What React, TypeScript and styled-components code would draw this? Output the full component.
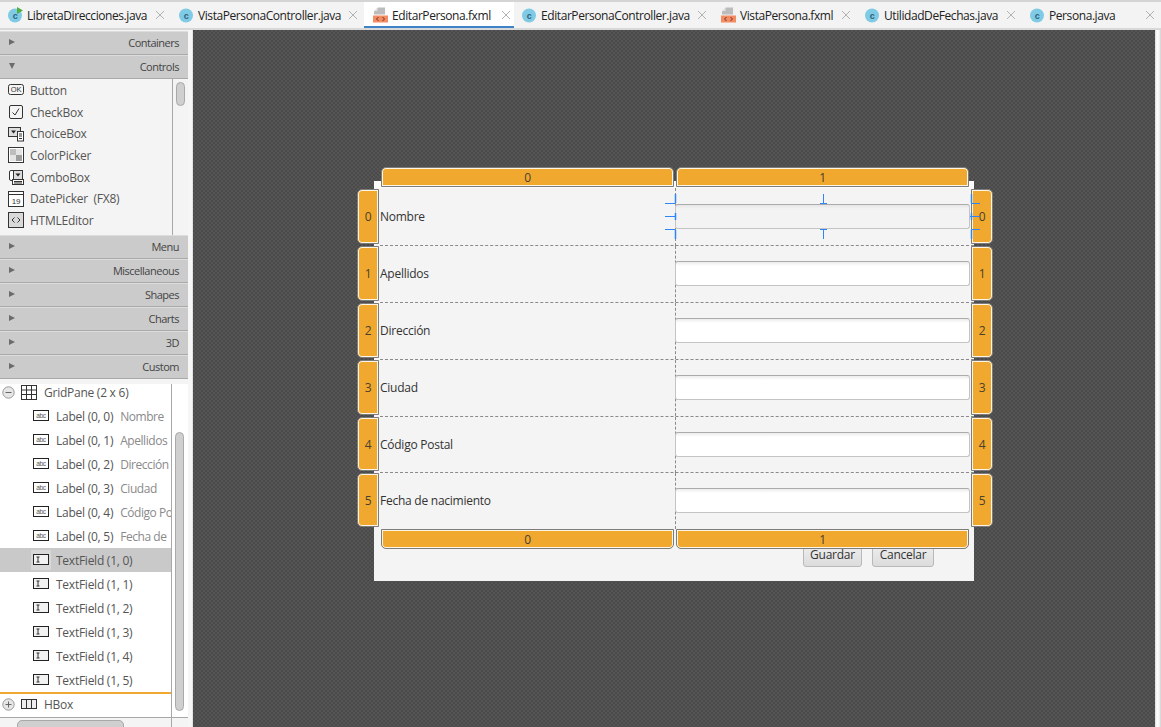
import React from "react";
import styled, { createGlobalStyle } from "styled-components";

const Global = createGlobalStyle`
  html, body { margin: 0; padding: 0; height: 100%; overflow: hidden; background: #f4f4f4; }
  #root { height: 100%; }
  * { box-sizing: border-box; }
`;

const Page = styled.div`
  width: 1161px;
  height: 727px;
  display: flex;
  flex-direction: column;
  font-family: "Open Sans", "Noto Sans", sans-serif;
  font-size: 12px;
  letter-spacing: -0.25px;
  color: #444;
  overflow: hidden;
`;

/* ---------- tabs ---------- */
const TabBar = styled.div`
  height: 30px;
  flex: none;
  display: flex;
  background: #f3f3f3;
  border-top: 2px solid #d4d4d4;
  border-bottom: 2px solid #d8d8d8;
`;
const Tab = styled.div<{ $width: number; $active?: boolean; $left: number }>`
  width: ${(p) => p.$width}px;
  height: 26px;
  flex: none;
  display: flex;
  align-items: center;
  padding: 2px ${(p) => (p.$active ? 3 : 6)}px 0 ${(p) => p.$left}px;
  gap: 4px;
  color: #222;
  letter-spacing: -0.42px;
  background: ${(p) => (p.$active ? "#fff" : "transparent")};
  border-bottom: 2px solid ${(p) => (p.$active ? "#3d83c6" : "transparent")};
  white-space: nowrap;
`;
const TabClose = styled.svg`
  width: 10px;
  height: 10px;
  margin-left: auto;
  flex: none;
`;
const TabIconBox = styled.svg`
  width: 15px;
  height: 16px;
  flex: none;
`;

const ClassIcon = ({ main }: { main?: boolean }) => (
  <TabIconBox viewBox="0 0 15 16">
    <circle cx="7" cy="8.5" r="7" fill="#7fcbe6" />
    <text x="7" y="11.5" textAnchor="middle" fontSize="9" fontFamily="Liberation Sans" fontWeight="700" fill="#2f5f78">c</text>
    {main && <path d="M9 0 L15 3.5 L9 7 Z" fill="#4fae3d" />}
  </TabIconBox>
);
const FxmlIcon = () => (
  <TabIconBox viewBox="0 0 15 16">
    <path d="M5 0.5 H12 V7.5 H1 V4.5 Z" fill="#bcbcbc" />
    <path d="M1 4 H4.5 V0.5 Z" fill="#e2e2e2" />
    <rect x="0" y="8.5" width="15" height="7" fill="#f38b63" />
    <polyline points="5.5,10 3.5,12 5.5,14" fill="none" stroke="#6b3322" strokeWidth="1" />
    <polyline points="9.5,10 11.5,12 9.5,14" fill="none" stroke="#6b3322" strokeWidth="1" />
  </TabIconBox>
);
const CloseGlyph = () => (
  <TabClose viewBox="0 0 10 10">
    <path d="M1 1 L9 9 M9 1 L1 9" stroke="#b2b2b2" strokeWidth="1" fill="none" />
  </TabClose>
);

const tabs = [
  { name: "LibretaDirecciones.java", w: 171, left: 8, kind: "main" },
  { name: "VistaPersonaController.java", w: 193, left: 8, kind: "class" },
  { name: "EditarPersona.fxml", w: 150, left: 9, kind: "fxml", active: true },
  { name: "EditarPersonaController.java", w: 199, left: 8, kind: "class" },
  { name: "VistaPersona.fxml", w: 144, left: 8, kind: "fxml" },
  { name: "UtilidadDeFechas.java", w: 165, left: 8, kind: "class" },
  { name: "Persona.java", w: 139, left: 8, kind: "class" },
];

/* ---------- sidebar ---------- */
const Body = styled.div`
  flex: 1;
  min-height: 0;
  display: flex;
`;
const Sidebar = styled.div`
  width: 188px;
  flex: none;
  display: flex;
  flex-direction: column;
  padding-top: 1px;
  background: #f4f4f4;
`;
const Gutter = styled.div`
  width: 5px;
  flex: none;
  background: #f6f6f6;
  border-right: 1px solid #e2e2e2;
`;
const RightStrip = styled.div`
  width: 6px;
  flex: none;
  background: linear-gradient(90deg, #dcdcdc, #fff 35%, #f4f4f4 70%, #cfcfcf);
`;
const Header = styled.div`
  height: 24px;
  flex: none;
  display: flex;
  align-items: center;
  justify-content: space-between;
  padding: 0 9px 2px 9px;
  background: #cbcbcb;
  border-top: 1px solid #dcdcdc;
  border-bottom: 1px solid #a9a9a9;
  color: #444;
  font-size: 11px;
  letter-spacing: -0.5px;
`;
const Arrow = styled.span<{ $open?: boolean }>`
  width: 0;
  height: 0;
  ${(p) =>
    p.$open
      ? `border-left: 3.5px solid transparent; border-right: 3.5px solid transparent; border-top: 6px solid #6c6c6c;`
      : `border-top: 3.5px solid transparent; border-bottom: 3.5px solid transparent; border-left: 6px solid #6c6c6c;`}
`;
const Palette = styled.div`
  height: 156px;
  flex: none;
  display: flex;
  overflow: hidden;
  background: #f4f4f4;
`;
const PaletteList = styled.div`
  width: 173px;
  flex: none;
  padding-top: 0.6px;
  border-right: 1px solid #a8a8a8;
  overflow: hidden;
`;
const PaletteRow = styled.div`
  height: 21.67px;
  display: flex;
  align-items: center;
  gap: 6px;
  padding-left: 8px;
  color: #555;
  white-space: pre;
`;
const IconSvg = styled.svg`
  width: 16px;
  height: 16px;
  flex: none;
`;
const ScrollTrack = styled.div<{ $pad: number }>`
  flex: 1;
  padding: ${(p) => p.$pad}px 3px 0 3px;
  display: flex;
  flex-direction: column;
`;
const Thumb = styled.div<{ $h: number }>`
  height: ${(p) => p.$h}px;
  width: 9px;
  flex: none;
  background: #cfcfcf;
  border: 1px solid #a9a9a9;
  border-radius: 5px;
`;

const S = { fill: "none", stroke: "#333", strokeWidth: 1 };
const paletteIcons: Record<string, React.ReactNode> = {
  ok: (
    <>
      <rect x="0.5" y="2.5" width="15" height="10" rx="2" {...S} />
      <text x="8" y="10.3" textAnchor="middle" fontSize="7.5" fontFamily="Liberation Sans" fill="#333">OK</text>
    </>
  ),
  check: (
    <>
      <rect x="1.5" y="1.5" width="13" height="13" rx="1.5" {...S} />
      <path d="M4.5 8.5 L7 11 L11 4.5" {...S} />
    </>
  ),
  choice: (
    <>
      <rect x="0.5" y="1.5" width="12" height="9" fill="#ddd" stroke="#333" />
      <path d="M3 4.5 H8 L5.5 7.5 Z" fill="#222" />
      <rect x="9.5" y="5.5" width="6" height="9.5" fill="#fff" stroke="#333" />
      <path d="M11 8 H14 M11 10 H14 M11 12.5 H14" {...S} />
    </>
  ),
  color: (
    <>
      <rect x="0.5" y="0.5" width="15" height="15" fill="#fff" stroke="#333" />
      <rect x="2" y="2" width="6" height="6" fill="#bdbdbd" />
      <rect x="8" y="8" width="6" height="6" fill="#9d9d9d" />
      <rect x="8" y="2" width="6" height="6" fill="#e4e4e4" />
      <rect x="2" y="8" width="6" height="6" fill="#e4e4e4" />
    </>
  ),
  combo: (
    <>
      <rect x="1.5" y="1.5" width="9" height="10" rx="1.5" fill="#fff" stroke="#333" />
      <rect x="5.5" y="1.5" width="9" height="9" fill="#ddd" stroke="#333" />
      <path d="M7.5 4.5 H12.5 L10 7.5 Z" fill="#222" />
      <rect x="4.5" y="10.5" width="11" height="5" fill="#fff" stroke="#333" />
      <path d="M6 12.5 H14 M6 14 H14" stroke="#333" />
    </>
  ),
  date: (
    <>
      <rect x="0.5" y="0.5" width="15" height="15" fill="#fff" stroke="#333" />
      <path d="M1 3.5 H15" stroke="#333" />
      <text x="8" y="12.6" textAnchor="middle" fontSize="8" fontFamily="Liberation Sans" fill="#333">19</text>
    </>
  ),
  html: (
    <>
      <rect x="0.5" y="0.5" width="15" height="15" fill="#d9d9d9" stroke="#333" />
      <path d="M6.5 5.5 L4 8 L6.5 10.5 M9.5 5.5 L12 8 L9.5 10.5" {...S} />
    </>
  ),
};
const paletteRows = [
  ["ok", "Button"],
  ["check", "CheckBox"],
  ["choice", "ChoiceBox"],
  ["color", "ColorPicker"],
  ["combo", "ComboBox"],
  ["date", "DatePicker  (FX8)"],
  ["html", "HTMLEditor"],
];

/* ---------- hierarchy tree ---------- */
const TreeGap = styled.div`
  height: 5px;
  flex: none;
  background: #f4f4f4;
`;
const TreePanel = styled.div`
  flex: 1;
  min-height: 0;
  display: flex;
  background: #fff;
  overflow: hidden;
`;
const TreeList = styled.div`
  width: 172px;
  flex: none;
  border-right: 1px solid #a8a8a8;
  overflow: hidden;
`;
const TreeScroller = styled.div`
  margin-top: -4px;
`;
const TreeRow = styled.div<{ $selected?: boolean; $root?: boolean; $marker?: boolean }>`
  height: 24px;
  display: flex;
  align-items: center;
  padding-left: ${(p) => (p.$root ? 2 : 31)}px;
  padding-bottom: ${(p) => (p.$marker ? 2 : 0)}px;
  background: ${(p) => (p.$selected ? "#c9c9c9" : "transparent")};
  border-top: ${(p) => (p.$marker ? "2px solid #f0a830" : "none")};
  color: #555;
  white-space: nowrap;
  overflow: hidden;
`;
const TreeIconWrap = styled.span<{ $selected?: boolean }>`
  width: 20px;
  height: 20px;
  display: flex;
  align-items: center;
  justify-content: center;
  flex: none;
  margin-right: 5px;
  background: ${(p) => (p.$selected ? "#d8d8d8" : "transparent")};
`;
const TreeValue = styled.span`
  color: #8a8a8a;
  margin-left: 7px;
  letter-spacing: -0.45px;
`;
const RootIconWrap = styled.span`
  display: flex;
  align-items: center;
  flex: none;
  gap: 6px;
  margin-right: 7px;
`;
const Disclosure = styled.svg`
  width: 13px;
  height: 13px;
  flex: none;
`;
const HScrollRow = styled.div`
  height: 10px;
  flex: none;
  display: flex;
  background: #f4f4f4;
  border-top: 1px solid #a8a8a8;
  overflow: hidden;
`;
const HScrollTrack = styled.div`
  width: 172px;
  flex: none;
  padding: 2px 0 0 17px;
  border-right: 1px solid #a8a8a8;
`;
const HThumb = styled.div`
  width: 107px;
  height: 12px;
  background: #cfcfcf;
  border: 1px solid #a9a9a9;
  border-radius: 5px;
`;

const AbcIcon = () => (
  <IconSvg viewBox="0 0 16 16">
    <rect x="0.5" y="2.5" width="15" height="10" fill="#fff" stroke="#222" />
    <text x="8" y="10" textAnchor="middle" fontSize="6.5" fontFamily="Liberation Sans" fill="#555">abc</text>
  </IconSvg>
);
const FieldIcon = () => (
  <IconSvg viewBox="0 0 16 16">
    <rect x="0.5" y="2.5" width="15" height="10" fill="#f2f2f2" stroke="#222" />
    <path d="M3.5 5 H6.5 M5 5 V10 M3.5 10 H6.5" stroke="#333" fill="none" />
  </IconSvg>
);
const GridIcon = () => (
  <IconSvg viewBox="0 0 16 16">
    <path d="M0.5 1 V15.5 M5.5 1 V15.5 M10.5 1 V15.5 M15.5 1 V15.5 M0 1.5 H16 M0 6 H16 M0 10.5 H16 M0 15.5 H16" stroke="#333" fill="none" />
  </IconSvg>
);
const HBoxIcon = () => (
  <IconSvg viewBox="0 0 16 16">
    <rect x="0.5" y="3.5" width="15" height="9" fill="#eee" stroke="#333" />
    <path d="M5.5 3.5 V12.5 M10.5 3.5 V12.5" stroke="#333" fill="none" />
  </IconSvg>
);
const DisclosureIcon = ({ plus }: { plus?: boolean }) => (
  <Disclosure viewBox="0 0 13 13">
    <circle cx="6.5" cy="6.5" r="5.7" fill="#e6e6e6" stroke="#999" />
    <path d={plus ? "M3.5 6.5 H9.5 M6.5 3.5 V9.5" : "M3.5 6.5 H9.5"} stroke="#666" />
  </Disclosure>
);

const labels = ["Nombre", "Apellidos", "Dirección", "Ciudad", "Código Po", "Fecha de"];

/* ---------- canvas ---------- */
const Canvas = styled.div`
  flex: 1;
  position: relative;
  overflow: hidden;
  background: repeating-conic-gradient(#555555 0 25%, #4a4a4a 0 50%) 0 0 / 4px 4px;
`;
const Surface = styled.div`
  position: absolute;
  left: 181px;
  top: 151px;
  width: 600px;
  height: 400px;
  padding: 7px 0 0 6px;
  background: #f4f4f4;
  color: #333;
`;
const TopEdge = styled.div`
  position: absolute;
  left: 0;
  top: 0;
  width: 100%;
  height: 7px;
  background: #fbfbfb;
`;
const GridBox = styled.div`
  position: relative;
  width: 594px;
`;
const GridRow = styled.div<{ $h: number; $last?: boolean; $nudge: number }>`
  height: ${(p) => p.$h}px;
  display: grid;
  grid-template-columns: 296px 294px;
  align-items: stretch;
  padding-right: 4px;
  padding-bottom: ${(p) => p.$nudge}px;
  border-bottom: ${(p) => (p.$last ? "none" : "1px dashed #8a8a8a")};
`;
const LabelCell = styled.div`
  display: flex;
  align-items: center;
  margin-bottom: -1px;
  padding-bottom: 2px;
  border-right: 1px dashed #8a8a8a;
  color: #333;
`;
const FieldCell = styled.div`
  display: flex;
  align-items: center;
  margin-left: -1px;
  position: relative;
`;
const TextField = styled.div<{ $selected?: boolean }>`
  width: 100%;
  height: 25px;
  background: ${(p) =>
    p.$selected
      ? "linear-gradient(#e6e6e6 0, #f3f3f3 4px)"
      : "linear-gradient(#ececec 0, #ffffff 4px)"};
  border: 1px solid #c4c4c4;
  border-top-color: #ababab;
  border-radius: 3px;
`;
const ButtonBar = styled.div`
  display: flex;
  justify-content: flex-end;
  gap: 10px;
  margin: 13px 40px 0 0;
  position: relative;
`;
const FormButton = styled.div<{ $w: number }>`
  width: ${(p) => p.$w}px;
  height: 25px;
  display: flex;
  align-items: center;
  justify-content: center;
  color: #333;
  background: linear-gradient(#f0f0f0, #dcdcdc);
  border: 1px solid #b9b9b9;
  border-radius: 3px;
`;
const HandleStrip = styled.div<{ $vertical?: boolean; $x: number; $y: number; $gap: number }>`
  position: absolute;
  left: ${(p) => p.$x}px;
  top: ${(p) => p.$y}px;
  display: flex;
  flex-direction: ${(p) => (p.$vertical ? "column" : "row")};
  gap: ${(p) => p.$gap}px;
`;
const Handle = styled.div<{ $w: number; $h: number; $radius: string }>`
  width: ${(p) => p.$w}px;
  height: ${(p) => p.$h}px;
  display: flex;
  align-items: center;
  justify-content: center;
  background: #f0a92e;
  border: 1px solid #7c7c7c;
  box-shadow: inset 0 0 0 1px #fdf6e6;
  border-radius: ${(p) => p.$radius};
  color: #4a4030;
`;
const Anchors = styled.svg`
  position: absolute;
  left: 286px;
  top: 9px;
  width: 330px;
  height: 54px;
  pointer-events: none;
`;

const rowHeights = [58, 57, 57, 57, 56, 56];
const rowNudge = [0, 1, 1, 1, 0, 1];
const handleHeights = [55, 55, 55, 55, 54, 54];
const rowTitles = ["Nombre", "Apellidos", "Dirección", "Ciudad", "Código Postal", "Fecha de nacimiento"];

export default function App() {
  return (
    <Page>
      <Global />
      <TabBar>
        {tabs.map((t) => (
          <Tab key={t.name} $width={t.w} $left={t.left} $active={t.active}>
            {t.kind === "fxml" ? <FxmlIcon /> : <ClassIcon main={t.kind === "main"} />}
            <span>{t.name}</span>
            <CloseGlyph />
          </Tab>
        ))}
      </TabBar>
      <Body>
        <Sidebar>
          <Header>
            <Arrow />
            <span>Containers</span>
          </Header>
          <Header>
            <Arrow $open />
            <span>Controls</span>
          </Header>
          <Palette>
            <PaletteList>
              {paletteRows.map(([k, n]) => (
                <PaletteRow key={k}>
                  <IconSvg viewBox="0 0 16 16">{paletteIcons[k]}</IconSvg>
                  <span>{n}</span>
                </PaletteRow>
              ))}
            </PaletteList>
            <ScrollTrack $pad={3}>
              <Thumb $h={24} />
            </ScrollTrack>
          </Palette>
          {["Menu", "Miscellaneous", "Shapes", "Charts", "3D", "Custom"].map((h) => (
            <Header key={h}>
              <Arrow />
              <span>{h}</span>
            </Header>
          ))}
          <TreeGap />
          <TreePanel>
            <TreeList>
              <TreeScroller>
                <TreeRow $root>
                  <RootIconWrap>
                    <DisclosureIcon />
                    <GridIcon />
                  </RootIconWrap>
                  GridPane (2 x 6)
                </TreeRow>
                {labels.map((l, i) => (
                  <TreeRow key={l}>
                    <TreeIconWrap>
                      <AbcIcon />
                    </TreeIconWrap>
                    Label (0, {i})<TreeValue>{l}</TreeValue>
                  </TreeRow>
                ))}
                {labels.map((_, i) => (
                  <TreeRow key={i} $selected={i === 0}>
                    <TreeIconWrap $selected={i === 0}>
                      <FieldIcon />
                    </TreeIconWrap>
                    TextField (1, {i})
                  </TreeRow>
                ))}
                <TreeRow $root $marker>
                  <RootIconWrap>
                    <DisclosureIcon plus />
                    <HBoxIcon />
                  </RootIconWrap>
                  HBox
                </TreeRow>
              </TreeScroller>
            </TreeList>
            <ScrollTrack $pad={48}>
              <Thumb $h={279} />
            </ScrollTrack>
          </TreePanel>
          <HScrollRow>
            <HScrollTrack>
              <HThumb />
            </HScrollTrack>
          </HScrollRow>
        </Sidebar>
        <Gutter />
        <Canvas>
          <Surface>
            <TopEdge />
            <GridBox>
              {rowHeights.map((h, i) => (
                <GridRow key={i} $h={h} $last={i === 5} $nudge={rowNudge[i]}>
                  <LabelCell>{rowTitles[i]}</LabelCell>
                  <FieldCell>
                    <TextField $selected={i === 0} />
                  </FieldCell>
                </GridRow>
              ))}
            </GridBox>
            <ButtonBar>
              <FormButton $w={59}>Guardar</FormButton>
              <FormButton $w={62}>Cancelar</FormButton>
            </ButtonBar>
            <HandleStrip $x={7} $y={-14} $gap={2}>
              <Handle $w={293} $h={20} $radius="5px 5px 0 0">0</Handle>
              <Handle $w={293} $h={20} $radius="5px 5px 0 0">1</Handle>
            </HandleStrip>
            <HandleStrip $x={7} $y={348} $gap={2}>
              <Handle $w={293} $h={20} $radius="0 0 5px 5px">0</Handle>
              <Handle $w={293} $h={20} $radius="0 0 5px 5px">1</Handle>
            </HandleStrip>
            <HandleStrip $vertical $x={-17} $y={8} $gap={2}>
              {handleHeights.map((h, i) => (
                <Handle key={i} $w={22} $h={h} $radius="5px 0 0 5px">{i}</Handle>
              ))}
            </HandleStrip>
            <HandleStrip $vertical $x={597} $y={8} $gap={2}>
              {handleHeights.map((h, i) => (
                <Handle key={i} $w={22} $h={h} $radius="0 5px 5px 0">{i}</Handle>
              ))}
            </HandleStrip>
            <Anchors viewBox="0 0 330 54">
              <g stroke="#2e86f5" strokeWidth="1" fill="none">
                <path d="M5 13.5 H15 M5 26.5 H15 M5 39.5 H15" />
                <path d="M15.5 4 V13 M15.5 23 V30 M15.5 40 V49" strokeWidth="1.5" />
                <path d="M163.5 4 V13.5 M160 13.5 H167 M160 39.5 H167 M163.5 40 V49" />
                <path d="M311 13.5 H320 M310 26.5 H320 M311 39.5 H320" />
                <path d="M311.5 4 V13 M311.5 23 V30 M311.5 40 V49" strokeWidth="1.5" />
              </g>
            </Anchors>
          </Surface>
        </Canvas>
        <RightStrip />
      </Body>
    </Page>
  );
}
